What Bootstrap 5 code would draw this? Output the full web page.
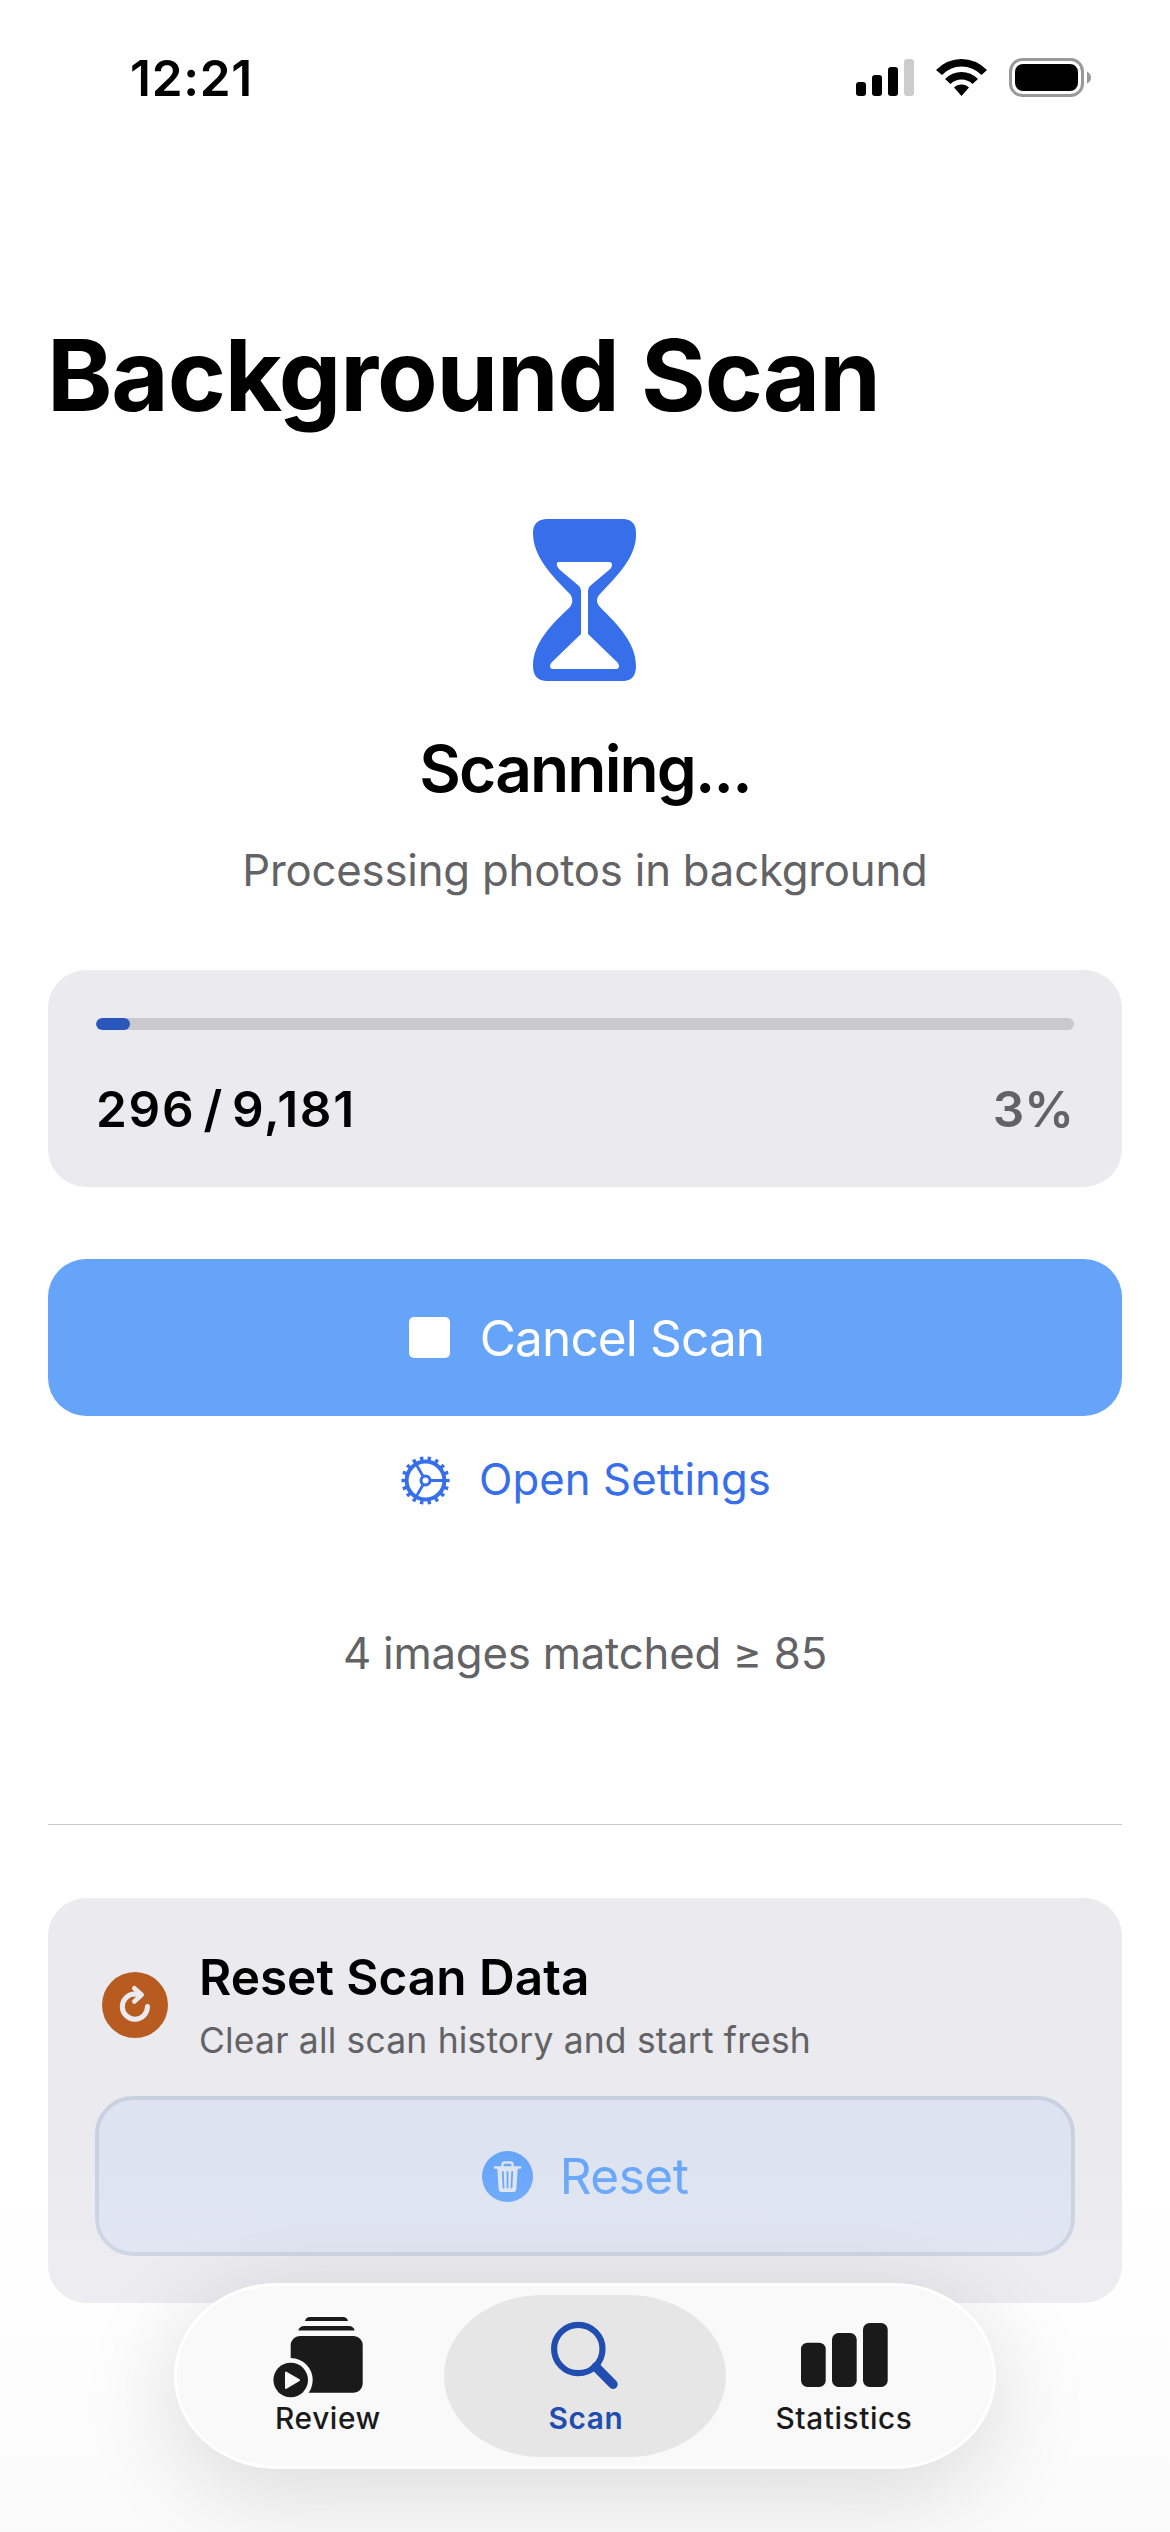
<!DOCTYPE html>
<html lang="en">
<head>
<meta charset="utf-8">
<meta name="viewport" content="width=device-width, initial-scale=1">
<title>Background Scan</title>
<link href="https://cdn.jsdelivr.net/npm/bootstrap@5.3.0/dist/css/bootstrap.min.css" rel="stylesheet">
<style>
body{font-family:Inter,"Liberation Sans",sans-serif;background:#fff;color:#000;width:1170px;height:2532px;overflow:hidden}
svg{display:block;flex:none}
.line-60{line-height:60px;white-space:nowrap}
.screen{height:2532px}
.statusbar{height:150px;padding:48px 78px 0 130px}
.clock{font-size:49.5px;font-weight:600;letter-spacing:.7px}
.content{padding:0 48px}
.page-title{font-size:99px;font-weight:700;line-height:120px;letter-spacing:-1.15px;margin:165px 0 0 -1px}
.hero-icon{margin-top:84px}
.state{font-size:64px;font-weight:600;line-height:80px;letter-spacing:-1.85px;margin:48px 0 32px}
.body-l{font-size:43.7px;color:#636366;letter-spacing:-.2px}
.soft-card{background:#eaeaef;border:0;border-radius:38px}
.progress-card{height:217px;padding:48px;margin-top:69px}
.track{height:12px;border-radius:6px;background:#c9c9ce;margin-bottom:49px}
.track .progress-bar{background:#2a57bb;border-radius:6px}
.h-l{font-size:49.5px;font-weight:600}
.count{letter-spacing:1.7px;word-spacing:-6px}
.tone-grey{color:#636366}
.btn-tall{border-radius:38px;font-size:49.5px;padding:0}
.btn-stop{background:#66a4f9!important;color:#fff!important;margin-top:72px;height:157px;border:0;gap:30px;letter-spacing:-.85px;padding-left:3px}
.btn-clear{background:#dde3f0!important;color:#66a5f9!important;border:4px solid #c8d1e0!important;height:160px;margin:31px -1px 0;width:auto;gap:27px;letter-spacing:-.5px}
.link-l{font-size:43.7px;color:#376eea;text-decoration:none;gap:29px;margin-top:34px;padding-left:2px;letter-spacing:.08px}
.matched{margin:114px 0 140px}
.rule{height:1px;background:#c8c8cb;margin-bottom:73px}
.reset-card{height:405px;padding:49px 48px 0}
.reset-head{gap:31px;padding-left:6px}
.reset-head svg{margin-bottom:3px}
.cap{font-size:35.5px;color:#636366;line-height:48px;margin-top:10px;letter-spacing:.16px;white-space:nowrap}
.fade-foot{height:380px;background:linear-gradient(rgba(250,250,250,0),rgba(250,250,250,.22) 40%,rgba(250,250,250,.95))}
.tabs{left:174px;width:822px;top:2283px;height:186px;border:3px solid #fff;border-radius:103px/93px;background:#f9f9f9;box-shadow:0 20px 100px rgba(0,0,0,.14);padding:9px}
.tabs .nav-link{flex:none;width:282px;height:162px;padding:15px 0 0;color:#1a1a1a;font-size:29.8px;font-weight:500;line-height:36px;text-align:center;border-radius:98px/81px;letter-spacing:.6px}
.tabs .nav-link+.nav-link{margin-left:-24px}
.tabs .nav-link.active{background:#e6e6e6;color:#214cb0;font-weight:600}
.tabs .nav-link span{padding-left:2px}
</style>
</head>
<body>
<div class="screen position-relative">
 <header class="statusbar d-flex justify-content-between align-items-start">
  <div class="line-60 clock">12:21</div>
  <svg width="237" height="60" viewBox="855 48 237 60">
   <rect x="856" y="82" width="10" height="14" rx="3"/><rect x="872" y="75" width="10" height="21" rx="3"/><rect x="888" y="67" width="10" height="29" rx="3"/><rect x="904" y="59" width="10" height="37" rx="3" fill="#ccc"/>
   <path d="M936 70Q947 59 961.500 59T987 70L981.500 75Q973 66.500 961.500 66.500T942 75ZM945 79Q952 72 961.500 72T978 79L972.500 84Q968 79.500 961.500 79.500T950.500 84ZM954 87.500Q957 84.500 961.500 84.500T969 87.500L961.500 96Z"/>
   <rect x="1010.500" y="59.500" width="72" height="36" rx="12" fill="none" stroke="#999" stroke-width="3"/><rect x="1015" y="64" width="63" height="27" rx="8"/><path d="M1087 71.500Q1091 73.500 1091 77.500T1087 83.500Z" fill="#999"/>
  </svg>
 </header>
 <main class="content">
  <h1 class="page-title text-nowrap">Background Scan</h1>
  <svg class="hero-icon mx-auto" width="104" height="162" viewBox="0 0 104 162">
   <path fill="#376eea" fill-rule="evenodd" d="M13 0H91Q103 1 103 14C104 37 85 56 67 75C63 79 63 84 67 88C85 106 103 124 103 147Q103 161 91 162H13Q0 161 0 147C0 124 18 106 37 88C40 84 40 79 37 75C18 56 0 37 0 14Q0 1 13 0ZM26 43Q23 43 24 47Q25 49 27 51L46 67Q48 69 48 72V115L19 143Q17 145 17 147Q17 150 20 150H83Q86 150 86 147Q86 145 84 143L55 115V72Q55 69 57 67L76 51Q79 49 79 46Q79 43 76 43Z"/>
  </svg>
  <h2 class="state text-center text-nowrap">Scanning...</h2>
  <p class="line-60 body-l text-center mb-0">Processing photos in background</p>
  <section class="card soft-card progress-card">
   <div class="track progress"><div class="progress-bar" style="width:3.45%"></div></div>
   <div class="d-flex justify-content-between h-l"><div class="line-60 count">296 / 9,181</div><div class="line-60 tone-grey">3%</div></div>
  </section>
  <button class="btn btn-tall btn-stop w-100 d-flex align-items-center justify-content-center"><svg width="41" height="41"><rect width="41" height="41" rx="5" fill="#fff"/></svg><span class="line-60">Cancel Scan</span></button>
  <a href="#" class="link-l d-flex align-items-center justify-content-center">
   <svg width="49" height="49" viewBox="-24.500 -24.500 49 49" fill="none" stroke="#376eea">
    <circle r="18.900" stroke-width="4"/>
    <circle r="22" stroke-width="4.200" pathLength="18" stroke-dasharray=".44 .56" stroke-dashoffset=".22"/>
    <circle r="4.500" stroke-width="3"/>
    <path stroke-width="2.800" d="M5.500 0H18M-2.750 -4.760L-9 -15.600M-2.750 4.760L-9 15.600"/>
   </svg><span class="line-60">Open Settings</span></a>
  <p class="line-60 body-l text-center matched">4 images matched ≥ 85</p>
  <div class="rule"></div>
  <section class="card soft-card reset-card">
   <div class="reset-head d-flex align-items-center">
    <svg width="66" height="66" fill="none" stroke="#eaeaef" stroke-linecap="round" stroke-linejoin="round"><circle cx="33" cy="33" r="33" fill="#b75b21" stroke="none"/><path stroke-width="5" d="M45.500 34.500A12.600 12.600 0 1 1 32.500 22L38 22.500"/><path stroke-width="4.600" d="M32.300 16.300L39.700 22.700L32.300 29.500"/></svg>
    <div><div class="line-60 h-l">Reset Scan Data</div><div class="cap">Clear all scan history and start fresh</div></div>
   </div>
   <button class="btn btn-tall btn-clear d-flex align-items-center justify-content-center">
    <svg width="51" height="51"><circle cx="25.500" cy="25.500" r="25.500" fill="#66a5f9"/><path d="M12.800 16.500H38.200M20.500 16V13.500Q20.500 11.500 22.500 11.500H28.500Q30.500 11.500 30.500 13.500V16" fill="none" stroke="#dde3f0" stroke-width="2.300" stroke-linecap="round"/><path d="M15.200 17H35.800L34.300 38.500Q34 41 31.500 41H19.500Q17 41 16.700 38.500Z" fill="#dde3f0"/><path d="M20.800 21L21.500 36.500M25.500 21V36.500M30.200 21L29.500 36.500" stroke="#66a5f9" stroke-width="1.800" stroke-linecap="round"/></svg>
    <span class="line-60">Reset</span></button>
  </section>
 </main>
 <div class="fade-foot position-absolute start-0 end-0 bottom-0"></div>
 <nav class="tabs nav flex-nowrap position-absolute">
  <a class="nav-link"><svg width="282" height="90" viewBox="186 2310 282 90" fill="#1a1a1a">
    <path d="M305 2321Q306 2317 310 2317H343Q347 2317 348 2321ZM298.300 2330.500Q299.500 2326 304 2326H349Q353.500 2326 354.700 2330.500Z"/><rect x="290.700" y="2336" width="72" height="56.700" rx="9"/><circle cx="290.700" cy="2380" r="22" fill="#f9f9f9"/><circle cx="290.700" cy="2380" r="17.300"/><path d="M286 2372.500V2388L299 2380.200Z" fill="#f9f9f9" stroke="#f9f9f9" stroke-width="2" stroke-linejoin="round"/></svg><span>Review</span></a>
  <a class="nav-link active"><svg width="282" height="90" viewBox="444 2310 282 90" fill="none" stroke="#214cb0"><circle cx="578.300" cy="2349" r="24.200" stroke-width="6.200"/><path d="M596 2367L613 2384.300" stroke-width="9.400" stroke-linecap="round"/></svg><span>Scan</span></a>
  <a class="nav-link"><svg width="282" height="90" viewBox="702 2310 282 90" fill="#1a1a1a"><rect x="801" y="2342.700" width="24.700" height="44.300" rx="6.500"/><rect x="832" y="2333" width="24.700" height="54" rx="6.500"/><rect x="863" y="2323" width="24.700" height="64" rx="6.500"/></svg><span>Statistics</span></a>
 </nav>
</div>
<script src="https://cdn.jsdelivr.net/npm/bootstrap@5.3.0/dist/js/bootstrap.bundle.min.js"></script>
</body>
</html>
